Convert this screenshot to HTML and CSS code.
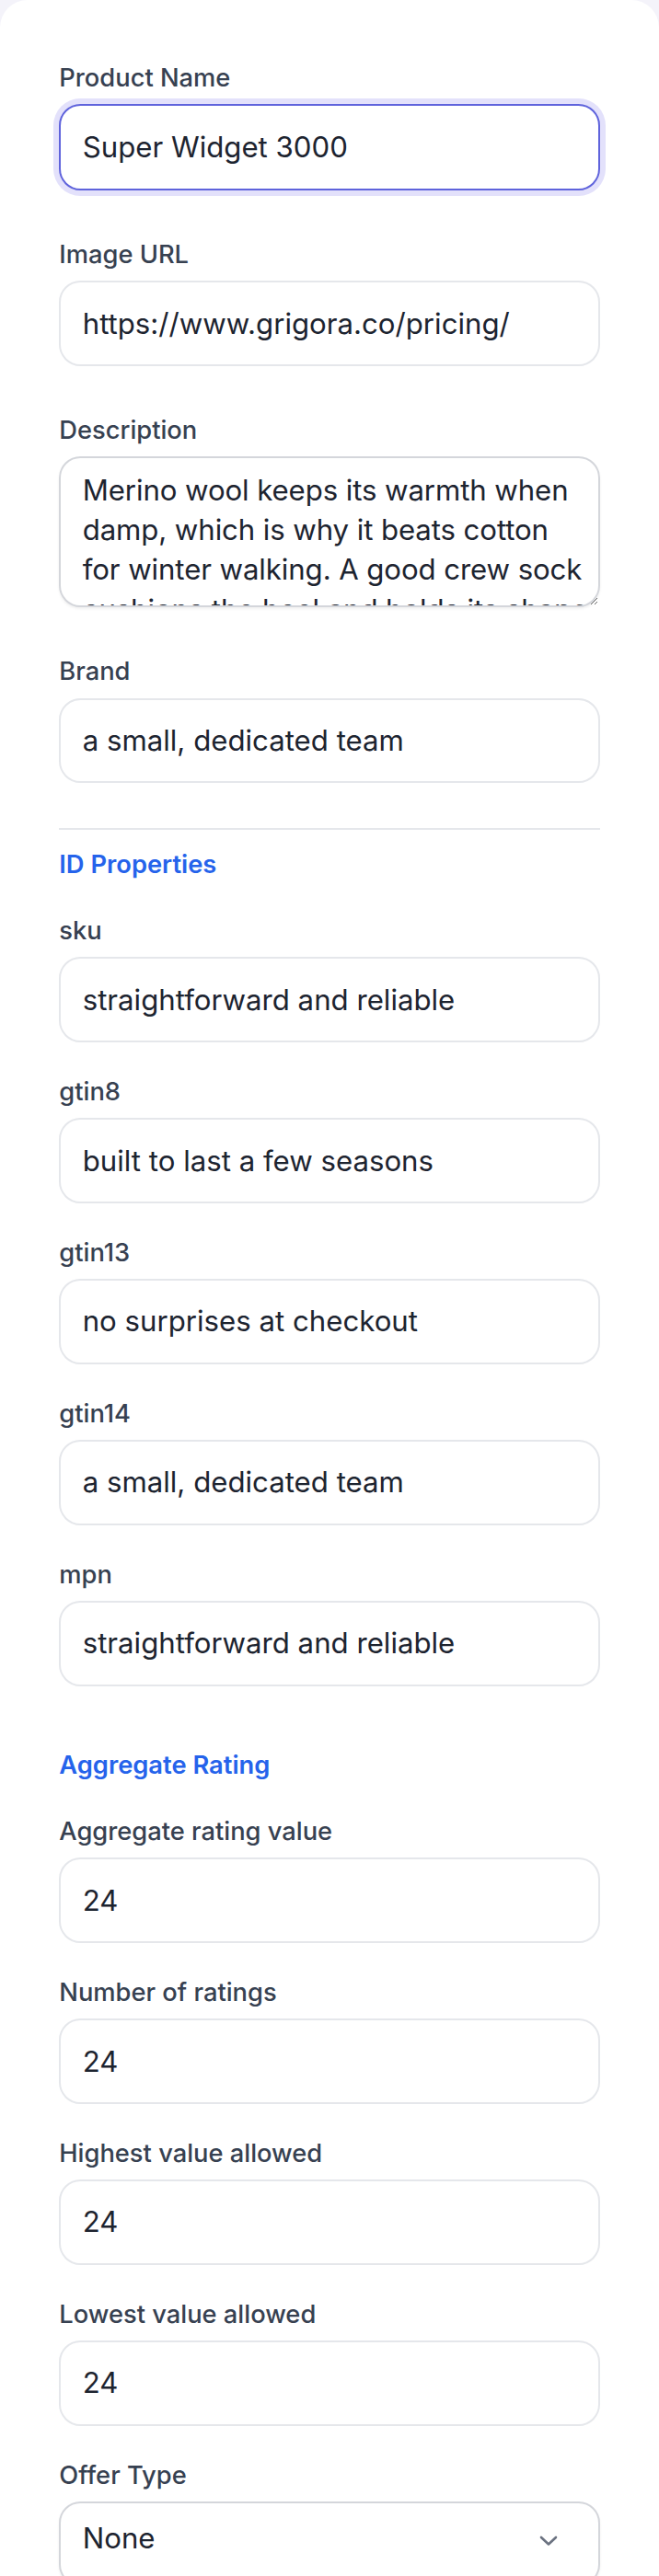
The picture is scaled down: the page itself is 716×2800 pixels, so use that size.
FILE: index.html
```html
<!DOCTYPE html>
<html lang="en">
<head>
<meta charset="utf-8">
<title>Product schema form</title>
<link rel="stylesheet" href="styles.css">
</head>
<body>
<div class="card">
  <div class="main-fields">
    <div class="field">
      <label class="label" for="pname">Product Name</label>
      <input class="input is-focused" id="pname" type="text" value="Super Widget 3000">
    </div>
    <div class="field">
      <label class="label" for="purl">Image URL</label>
      <input class="input" id="purl" type="text" value="https://www.grigora.co/pricing/">
    </div>
    <div class="field">
      <label class="label" for="pdesc">Description</label>
      <textarea class="textarea" id="pdesc">Merino wool keeps its warmth when damp, which is why it beats cotton for winter walking. A good crew sock cushions the heel and holds its shape after many washes.</textarea>
    </div>
    <div class="field">
      <label class="label" for="pbrand">Brand</label>
      <input class="input" id="pbrand" type="text" value="a small, dedicated team">
    </div>
  </div>

  <section class="group group-divided">
    <h3 class="group-title">ID Properties</h3>
    <div class="field">
      <label class="label" for="sku">sku</label>
      <input class="input" id="sku" type="text" value="straightforward and reliable">
    </div>
    <div class="field">
      <label class="label" for="gtin8">gtin8</label>
      <input class="input" id="gtin8" type="text" value="built to last a few seasons">
    </div>
    <div class="field">
      <label class="label" for="gtin13">gtin13</label>
      <input class="input" id="gtin13" type="text" value="no surprises at checkout">
    </div>
    <div class="field">
      <label class="label" for="gtin14">gtin14</label>
      <input class="input" id="gtin14" type="text" value="a small, dedicated team">
    </div>
    <div class="field">
      <label class="label" for="mpn">mpn</label>
      <input class="input" id="mpn" type="text" value="straightforward and reliable">
    </div>
  </section>

  <section class="group group-spaced">
    <h3 class="group-title">Aggregate Rating</h3>
    <div class="field">
      <label class="label" for="rv">Aggregate rating value</label>
      <input class="input" id="rv" type="text" value="24">
    </div>
    <div class="field">
      <label class="label" for="rc">Number of ratings</label>
      <input class="input" id="rc" type="text" value="24">
    </div>
    <div class="field">
      <label class="label" for="rh">Highest value allowed</label>
      <input class="input" id="rh" type="text" value="24">
    </div>
    <div class="field">
      <label class="label" for="rl">Lowest value allowed</label>
      <input class="input" id="rl" type="text" value="24">
    </div>
    <div class="field">
      <label class="label" for="offer">Offer Type</label>
      <div class="select-wrap">
        <select class="select" id="offer">
          <option>None</option>
          <option>Offer</option>
          <option>AggregateOffer</option>
        </select>
        <svg class="chevron" width="20" height="12" viewBox="0 0 20 12" aria-hidden="true">
          <path d="M2 2 L10 9.5 L18 2" fill="none" stroke="#6b7280" stroke-width="2.6" stroke-linecap="round" stroke-linejoin="round"/>
        </svg>
      </div>
    </div>
  </section>
</div>
</body>
</html>
```

FILE: styles.css
```css
* {
  box-sizing: border-box;
}

html, body {
  margin: 0;
  padding: 0;
}

body {
  background: #f4f3fa;
  font-family: Inter, "Noto Sans", "Liberation Sans", sans-serif;
  color: #1f2937;
}

.card {
  background: #ffffff;
  border-radius: 30px 30px 0 0;
  padding: 64.6px 64.3px 40px;
  display: flex;
  flex-direction: column;
}

.main-fields {
  display: flex;
  flex-direction: column;
  gap: 50px;
}

.field {
  display: flex;
  flex-direction: column;
}

.label {
  display: block;
  font-size: 27.3px;
  line-height: 39px;
  font-weight: 500;
  color: #374151;
  margin-bottom: 9.3px;
}

.input,
.textarea,
.select {
  display: block;
  width: 100%;
  margin: 0;
  font-family: Inter, "Noto Sans", "Liberation Sans", sans-serif;
  font-size: 31.2px;
  line-height: 43.3px;
  color: #1d2430;
  background: #ffffff;
  border-radius: 23.4px;
  outline: none;
}

.input {
  height: 92.6px;
  padding: 0 23.4px;
  border: 2px solid #e5e7eb;
}

.input.is-focused {
  height: 94.3px;
  border-color: #5f63dc;
  box-shadow: 0 0 0 6px #e3e1fb;
}

.textarea {
  height: 164px;
  padding: 13.3px 6px 23.4px 23.4px;
  border: 2px solid #d4d6db;
  box-shadow: 0 2px 3px rgba(0, 0, 0, 0.06);
  overflow: hidden;
  resize: vertical;
  letter-spacing: -0.1px;
}

.group {
  display: flex;
  flex-direction: column;
  gap: 34px;
}

.group-divided {
  margin-top: 48.8px;
  border-top: 2px solid #e5e7eb;
  padding-top: 18px;
}

.group-spaced {
  margin-top: 66.5px;
}

.group-title {
  margin: 0 0 -1px;
  font-size: 27.3px;
  line-height: 39px;
  font-weight: 600;
  color: #2563eb;
}

.select-wrap {
  position: relative;
}

.select {
  appearance: none;
  -webkit-appearance: none;
  height: 92px;
  padding: 17px 23.4px 27px;
  border: 2px solid #d4d6db;
  box-shadow: 0 2px 3px rgba(0, 0, 0, 0.06);
}

.chevron {
  position: absolute;
  left: 522px;
  top: 37px;
  pointer-events: none;
}
```
